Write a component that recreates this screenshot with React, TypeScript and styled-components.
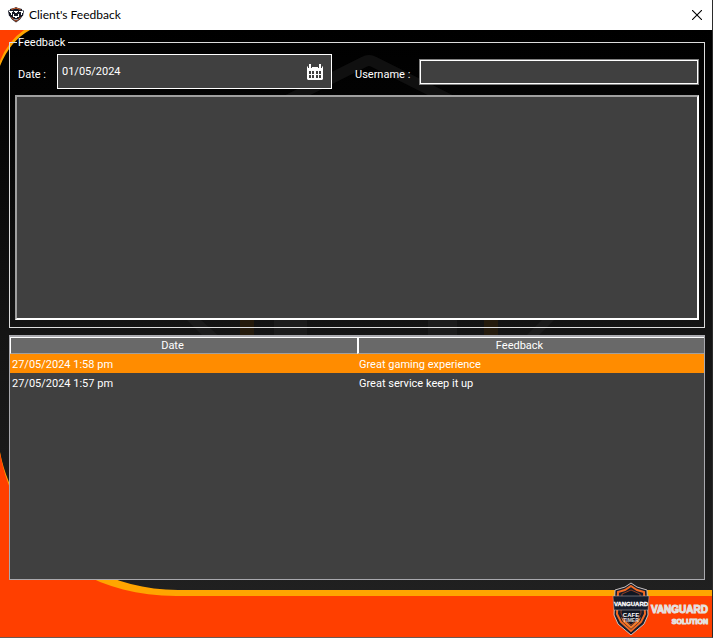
import React, { useState } from "react";
import styled, { createGlobalStyle } from "styled-components";

const GlobalStyle = createGlobalStyle`
  *, *::before, *::after { box-sizing: border-box; }
  body { margin: 0; background: #252525; }
`;

const uiFont = `Roboto, "Liberation Sans", Arial, sans-serif`;

const Window = styled.div`
  display: flex;
  flex-direction: column;
  min-height: 100vh;
  border-right: 1px solid #2b2b2b;
  border-bottom: 1px solid #6b5a54;
  font: 11px/14px ${uiFont};
  color: #fff;
`;

const TitleBar = styled.header`
  display: flex;
  align-items: center;
  height: 30px;
  padding: 0 10px 0 8px;
  background: #fff;
  color: #000;
`;

const Title = styled.h1`
  flex: 1;
  margin: 0 0 0 5px;
  font: 400 12px/16px Lato, "Open Sans", sans-serif;
`;

const IconButton = styled.button`
  display: flex;
  align-items: center;
  justify-content: center;
  flex: none;
  padding: 0;
  border: 0;
  background: transparent;
  color: inherit;
`;

const Body = styled.main`
  position: relative;
  isolation: isolate;
  display: flex;
  flex: 1;
  flex-direction: column;
  padding: 4px 7px 0 9px;
`;

const Backdrop = styled.svg`
  position: absolute;
  inset: 0;
  z-index: -1;
  width: 100%;
  height: 100%;
`;

const Group = styled.fieldset`
  min-width: 0;
  margin: 0 0 7px;
  padding: 4px 5px 7px;
  border: 1px solid #dcdcdc;
`;

const Legend = styled.legend`
  margin-left: 2px;
  padding: 2px 3px 0 1px;
`;

const Fields = styled.div`
  display: flex;
  align-items: center;
  margin-bottom: 6px;
`;

const Label = styled.label<{ $width: number; $indent: number }>`
  flex: none;
  width: ${(p) => p.$width}px;
  padding: 6px 0 0 ${(p) => p.$indent}px;
`;

const DateBox = styled.div`
  display: flex;
  align-items: center;
  flex: none;
  width: 275px;
  height: 35px;
  padding: 0 8px 0 4px;
  border: 1px solid #fff;
  background: #404040;
`;

const DateInput = styled.input`
  flex: 1;
  min-width: 0;
  padding: 0;
  border: 0;
  outline: 0;
  background: transparent;
  color: #fff;
  font: inherit;
`;

const NameInput = styled.input`
  flex: 1;
  min-width: 0;
  height: 26px;
  padding: 0 4px;
  border: 1px solid #808080;
  border-radius: 0;
  outline: 1px solid #fff;
  outline-offset: -2px;
  background: #404040;
  color: #fff;
  font: inherit;
`;

const Message = styled.textarea`
  display: block;
  width: 100%;
  height: 225px;
  padding: 3px;
  border: 2px solid;
  border-color: #a0a0a0 #fff #fff #a0a0a0;
  outline: 0;
  resize: none;
  background: #404040;
  color: #fff;
  font: inherit;
`;

const List = styled.section`
  flex: 1;
  border: 1px solid #a9a9ae;
  border-top-width: 2px;
  background: #404040;
`;

const Table = styled.table`
  width: 100%;
  table-layout: fixed;
  border-collapse: separate;
  border-spacing: 0;
`;

const HeadRow = styled.tr`
  background: #696969;
`;

const HeadCell = styled.th`
  height: 17px;
  padding: 1px 24px 0 1px;
  border-top: 1px solid #fff;
  border-left: 1px solid #fff;
  border-bottom: 1px solid #a0a0a0;
  font-weight: 400;

  &:last-child {
    padding-right: 25px;
    border-left-width: 2px;
  }
`;

const Row = styled.tr<{ $selected: boolean }>`
  background: ${(p) => (p.$selected ? "#ff8c00" : "transparent")};
`;

const Cell = styled.td`
  height: 19px;
  padding: 3px 2px 0;
  white-space: nowrap;
`;

const Footer = styled.footer`
  display: flex;
  align-items: center;
  justify-content: flex-end;
  height: 57px;
`;

const Brand = styled.div`
  display: flex;
  flex-direction: column;
  align-items: flex-end;
  margin: 12px -3px 0 0;
  color: #ededed;
  font-family: "Liberation Sans", sans-serif;
  font-weight: 700;
  -webkit-text-stroke: 1px #e4e0df;
`;

const BrandLine = styled.span<{ $size: number; $height: number }>`
  font-size: ${(p) => p.$size}px;
  line-height: ${(p) => p.$height}px;
`;

const SmallShield = () => (
  <svg width="16" height="16" viewBox="0 0 16 16" aria-hidden="true">
    <path d="M8 0 10 1 14 2 14.5 9 12 12.5 8 15.5 4 12.5 1.5 9 2 2 6 1Z" fill="#171a27" />
    <path d="M3.5 2.5 8 1 12.5 2.5M3.5 10.5 8 14.3 12.5 10.5" fill="none" stroke="#d9622b" />
    <path d="M0 3.5H16L15 9H1Z" fill="#171a27" />
    <path d="M1 4H5V5H4V8H3V6H2V5H1ZM6 4H10V5H9V6H7V5H6ZM11 4H15V6H14V8H13V5H11ZM5 7H6V9H10V7H11V10H9V11H7V10H5Z" fill="#fff" />
    <path d="M6 12.5H10" stroke="#9a9ca8" />
  </svg>
);

const ShieldLogo = () => (
  <svg width="40" height="54" viewBox="0 0 40 54" role="img" aria-label="Vanguard Cafe Timer">
    <path d="M20 1 26 5 36 8 37 33 33 42 20 53 7 42 3 33 4 8 14 5Z" fill="#161d2b" stroke="#c9c2c0" />
    <path d="M20 4 26 8 33 10 34 32 30 40 20 49 10 40 6 32 7 10 14 8Z" fill="#161d2b" stroke="#f16a24" strokeWidth="2" />
    <path d="M20 8 29 12 30 31 27 37 20 43 13 37 10 31 11 12Z" fill="#101622" stroke="#8f3d24" />
    <path d="M10 35 20 44 30 35 28 40 20 47 12 40Z" fill="#f47b2a" />
    <path d="M2 14H38L37 28H3Z" fill="#161d2b" stroke="#b9b5b6" strokeWidth="0.5" />
    <text x="20" y="24" textAnchor="middle" fill="#fff" stroke="#fff" strokeWidth="0.3" fontFamily="Liberation Sans" fontSize="6" fontWeight="700">VANGUARD</text>
    <text x="20" y="35" textAnchor="middle" fill="#fff" fontFamily="Liberation Sans" fontSize="6" fontWeight="700">CAFE</text>
    <text x="20" y="40" textAnchor="middle" fill="#d5d6da" fontFamily="Liberation Sans" fontSize="5" fontWeight="700">TIMER</text>
  </svg>
);

const CalendarIcon = () => (
  <svg width="16" height="16" viewBox="0 0 16 16" aria-hidden="true">
    <path d="M1 2H15L16 3V15L15 16H1L0 15V3Z" fill="#fff" />
    <path d="M1 0H5V4H1ZM11 0H15V4H11Z" fill="#404040" />
    <path d="M2 0H4V4H2ZM12 0H14V4H12Z" fill="#fff" />
    <path d="M5 2H11V3H5Z" fill="#404040" />
    <path d="M2 7H14V14H2Z" fill="#fff" />
    <path d="M2 7H4V10H2ZM5 7H7V10H5ZM9 7H11V10H9ZM12 7H14V10H12ZM2 11H4V14H2ZM5 11H7V14H5ZM9 11H11V14H9ZM12 11H14V14H12Z" fill="#404040" />
  </svg>
);

const CloseIcon = () => (
  <svg width="10" height="10" viewBox="0 0 10 10" aria-hidden="true">
    <path d="M0 0 10 10M10 0 0 10" stroke="#000" strokeWidth="1.1" />
  </svg>
);

const BackgroundArt = () => (
  <Backdrop viewBox="0 0 712 607" preserveAspectRatio="none" aria-hidden="true">
    <defs>
      <linearGradient id="shade" x1="0" y1="0" x2="0" y2="1">
        <stop offset="0" stopColor="#000" />
        <stop offset="0.1" stopColor="#020202" />
        <stop offset="0.5" stopColor="#141414" />
        <stop offset="1" stopColor="#222" />
      </linearGradient>
    </defs>
    <rect width="712" height="607" fill="url(#shade)" />
    <path d="M270 79 364 32Q369 29 374 32L468 79" fill="none" stroke="#101010" strokeWidth="11" />
    <path d="M187 290H201L221 308H205ZM274 290H307V308H274ZM428 290H457V308H428ZM542 290H554L536 308H524Z" fill="#1c1c1c" />
    <path d="M240 290H254V308H240ZM484 290H498V308H484Z" fill="#251b0c" />
    <path d="M0 0H30Q10 11 0 36Z" fill="#ffa500" />
    <path d="M0 0H24Q8 11 0 31Z" fill="#ff3f00" />
    <path d="M0 422C14 498 90 560 178 560H712V607H0Z" fill="#ffa500" />
    <path d="M0 423C15 503 75 566 176 566H712V607H0Z" fill="#ff3f00" />
  </Backdrop>
);

const entries = [
  { date: "27/05/2024 1:58 pm", text: "Great gaming experience" },
  { date: "27/05/2024 1:57 pm", text: "Great service keep it up" },
];

export default function App() {
  const [selected, setSelected] = useState(0);

  return (
    <>
      <GlobalStyle />
      <Window>
        <TitleBar>
          <SmallShield />
          <Title>Client's Feedback</Title>
          <IconButton type="button" aria-label="Close"><CloseIcon /></IconButton>
        </TitleBar>
        <Body>
          <BackgroundArt />
          <Group>
            <Legend>Feedback</Legend>
            <Fields>
              <Label htmlFor="date" $width={42} $indent={3}>Date :</Label>
              <DateBox>
                <DateInput id="date" defaultValue="01/05/2024" />
                <IconButton type="button" aria-label="Choose date"><CalendarIcon /></IconButton>
              </DateBox>
              <Label htmlFor="username" $width={87} $indent={23}>Username :</Label>
              <NameInput id="username" />
            </Fields>
            <Message aria-label="Feedback message" />
          </Group>
          <List>
            <Table>
              <thead>
                <HeadRow>
                  <HeadCell scope="col">Date</HeadCell>
                  <HeadCell scope="col">Feedback</HeadCell>
                </HeadRow>
              </thead>
              <tbody>
                {entries.map((entry, i) => (
                  <Row key={entry.date} $selected={i === selected} onClick={() => setSelected(i)}>
                    <Cell>{entry.date}</Cell>
                    <Cell>{entry.text}</Cell>
                  </Row>
                ))}
              </tbody>
            </Table>
          </List>
          <Footer>
            <ShieldLogo />
            <Brand>
              <BrandLine $size={10} $height={13}>VANGUARD</BrandLine>
              <BrandLine $size={7} $height={11}>SOLUTION</BrandLine>
            </Brand>
          </Footer>
        </Body>
      </Window>
    </>
  );
}
